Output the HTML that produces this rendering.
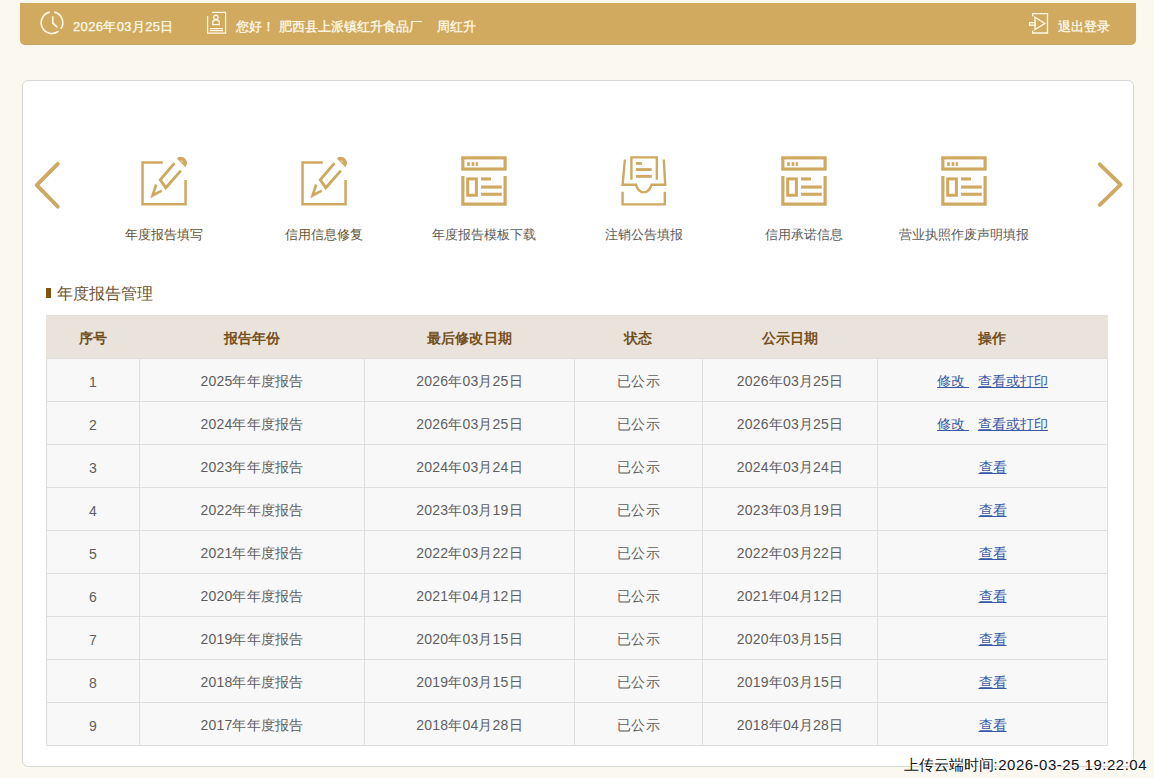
<!DOCTYPE html>
<html><head><meta charset="utf-8">
<style>
*{margin:0;padding:0;box-sizing:border-box}
html,body{width:1154px;height:778px;overflow:hidden}
body{background:#FAF8EF;font-family:"Liberation Sans",sans-serif;position:relative}
.abs{position:absolute}
#bar{left:20px;top:3px;width:1116px;height:42px;background:#D2AA5F;border-bottom:1px solid #C9A870;border-radius:0 0 5px 5px}
.ht{position:absolute;color:#FFFCEE;-webkit-text-stroke:0.25px #FFFCEE;font-size:13px;line-height:16px;white-space:nowrap;top:19px}
#panel{left:22px;top:80px;width:1112px;height:687px;background:#fff;border:1px solid #D6D6D6;border-radius:6px}
.lbl{position:absolute;top:226px;width:160px;text-align:center;font-size:13px;line-height:17px;color:#5A5A5A;white-space:nowrap}
#sec{left:57px;top:284px;font-size:16px;line-height:20px;color:#6A5230}
#secbar{left:46px;top:288px;width:5px;height:10px;background:#84520F}
table{position:absolute;left:46px;top:315px;border-collapse:collapse;table-layout:fixed;width:1061px}
th,td{height:43px;text-align:center;font-size:14px;padding:0;letter-spacing:0.2px}
th{padding-top:4px}
td{padding-top:3px}
th{background:linear-gradient(#EAE3DC 0,#EAE3DC 37px,#E6E3DD 41px);color:#74501C;font-weight:bold;border:1px solid #EAE3DC;border-top-color:#E2DCD7;border-bottom-color:#E0DDDA}
td{background:#F8F8F8;color:#5E5E5E;border:1px solid #DEDEDE}
a{color:#3858A8;text-decoration:underline;letter-spacing:0}
#wm{right:7px;top:755px;font-size:15px;line-height:20px;color:#111;text-shadow:0 0 2px #fff,0 0 2px #fff}
</style></head><body>
<div id="bar" class="abs"></div>
<svg class="abs" style="left:0;top:0" width="1154" height="60" viewBox="0 0 1154 60">
 <g fill="none" stroke="#FFF9E8" stroke-width="1.6">
  <path d="M54.25 12.14 A10.8 10.8 0 0 1 60.85 28.9"/>
  <path d="M58.65 31.21 A10.8 10.8 0 1 1 49.75 12.14"/>
  <path d="M52.8 16.2 V23.1 L57.4 27.4"/>
 </g>
 <g fill="none" stroke="#FFF9E8" stroke-width="1.25">
  <path d="M207.6 15.9 V33.2 H225.6 V12.45 H212"/>
  <circle cx="215.9" cy="17.3" r="2.2"/>
  <path d="M212.7 24.5 V22.5 C212.7 20.8 214 19.8 215.9 19.8 C217.8 19.8 219.3 20.8 219.3 22.5 V24.5 Z"/>
  <path d="M209.9 28.7 H223 M209.9 30.65 H223"/>
 </g>
 <g fill="none" stroke="#FFF9E8" stroke-width="1.35">
  <path d="M1032.7 16.5 V13.6 H1047.5 V33 H1032.7 V30.4"/>
  <path d="M1035 17.25 L1044.8 23.5 L1035 29.6 Z"/>
  <rect x="1029.6" y="22.6" width="5.6" height="2.6"/>
 </g>
</svg>
<div class="ht" style="left:73px;letter-spacing:0.35px">2026年03月25日</div>
<div class="ht" style="left:236px">您好！ 肥西县上派镇红升食品厂<span style="margin-left:15px">周红升</span></div>
<div class="ht" style="left:1058px">退出登录</div>

<div id="panel" class="abs"></div>

<svg class="abs" style="left:0;top:0" width="1154" height="260" viewBox="0 0 1154 260">
 <defs>
  <g id="ied" fill="none" stroke="#CFA962" stroke-width="2.5">
   <path d="M162.8 162.5 H142.55 V204.3 H185.55 V180.1"/>
   <path d="M174.5 163.1 L160.3 179.9 L165.8 187.8 L180.9 170.6" stroke-width="2.9"/>
   <path d="M156.2 184.5 L152.6 195.4 L161.8 190.6" stroke-width="2.7"/>
   <path d="M176.8 158.3 A6.2 6.2 0 0 1 185.3 167.3 Z" fill="#CFA962" stroke="none"/>
   <path d="M181.2 160.6 L182.6 162.2" stroke="#F4E6C8" stroke-width="1"/>
  </g>
  <g id="itp">
   <rect x="462.85" y="157.85" width="42.25" height="11.2" fill="none" stroke="#CFA962" stroke-width="3.2"/>
   <path d="M462.85 176 V204.15 H505.1 V176" fill="none" stroke="#CFA962" stroke-width="3.2"/>
   <rect x="467.7" y="178.9" width="8.7" height="16.35" fill="none" stroke="#CFA962" stroke-width="3"/>
   <g fill="#CFA962">
    <rect x="467.1" y="162.2" width="2.7" height="3.7"/>
    <rect x="471.6" y="162.2" width="2.7" height="3.7"/>
    <rect x="475.7" y="162.2" width="2.4" height="3.7"/>
    <rect x="481" y="177.4" width="10" height="3.1"/>
    <rect x="481" y="185.5" width="20.75" height="3.1"/>
    <rect x="481" y="192.7" width="20.75" height="3.1"/>
   </g>
  </g>
 </defs>
 <g fill="none" stroke="#CFA962" stroke-width="3.9" stroke-linecap="round" stroke-linejoin="round">
  <path d="M57.8 163.9 L36.7 185.2 L57.8 206.6"/>
  <path d="M1099.8 164.4 L1120.6 184.6 L1099.8 204.9"/>
 </g>
 <use href="#ied"/>
 <use href="#ied" x="160"/>
 <use href="#itp"/>
 <use href="#itp" x="320"/>
 <use href="#itp" x="480"/>
 <g fill="none" stroke="#CFA962" stroke-width="2.4">
  <path d="M631.4 179.7 V157.4 H656.85 V179.7"/>
  <path d="M624.9 159.5 L622.6 184.7 H635.9 C637.5 190 640 192.4 643.8 192.4 C647.6 192.4 650 190 651.6 184.7 H665.2 L663.8 159.5"/>
  <path d="M622.6 191.7 V204.4 H664.8 V191.7"/>
 </g>
 <g fill="#CFA962">
  <rect x="635.9" y="162" width="5.95" height="2.8"/>
  <rect x="635.9" y="168.1" width="15.75" height="2.9"/>
  <rect x="635.9" y="174.9" width="15.9" height="2.9"/>
 </g>
</svg>
<div class="lbl" style="left:84px;color:#625230">年度报告填写</div>
<div class="lbl" style="left:244px;color:#625230">信用信息修复</div>
<div class="lbl" style="left:404px">年度报告模板下载</div>
<div class="lbl" style="left:564px">注销公告填报</div>
<div class="lbl" style="left:724px">信用承诺信息</div>
<div class="lbl" style="left:884px">营业执照作废声明填报</div>

<div id="secbar" class="abs"></div>
<div id="sec" class="abs">年度报告管理</div>

<table>
<colgroup><col style="width:93px"><col style="width:225px"><col style="width:210px"><col style="width:128px"><col style="width:175px"><col style="width:230px"></colgroup>
<tr><th>序号</th><th>报告年份</th><th>最后修改日期</th><th>状态</th><th>公示日期</th><th>操作</th></tr>
<tr><td>1</td><td>2025年年度报告</td><td>2026年03月25日</td><td>已公示</td><td>2026年03月25日</td><td><a>修改 </a><a style="margin-left:9px">查看或打印</a></td></tr>
<tr><td>2</td><td>2024年年度报告</td><td>2026年03月25日</td><td>已公示</td><td>2026年03月25日</td><td><a>修改 </a><a style="margin-left:9px">查看或打印</a></td></tr>
<tr><td>3</td><td>2023年年度报告</td><td>2024年03月24日</td><td>已公示</td><td>2024年03月24日</td><td><a>查看</a></td></tr>
<tr><td>4</td><td>2022年年度报告</td><td>2023年03月19日</td><td>已公示</td><td>2023年03月19日</td><td><a>查看</a></td></tr>
<tr><td>5</td><td>2021年年度报告</td><td>2022年03月22日</td><td>已公示</td><td>2022年03月22日</td><td><a>查看</a></td></tr>
<tr><td>6</td><td>2020年年度报告</td><td>2021年04月12日</td><td>已公示</td><td>2021年04月12日</td><td><a>查看</a></td></tr>
<tr><td>7</td><td>2019年年度报告</td><td>2020年03月15日</td><td>已公示</td><td>2020年03月15日</td><td><a>查看</a></td></tr>
<tr><td>8</td><td>2018年年度报告</td><td>2019年03月15日</td><td>已公示</td><td>2019年03月15日</td><td><a>查看</a></td></tr>
<tr><td>9</td><td>2017年年度报告</td><td>2018年04月28日</td><td>已公示</td><td>2018年04月28日</td><td><a>查看</a></td></tr>
</table>

<div id="wm" class="abs">上传云端时间<span style="letter-spacing:0.5px">:2026-03-25 19:22:04</span></div>
</body></html>
